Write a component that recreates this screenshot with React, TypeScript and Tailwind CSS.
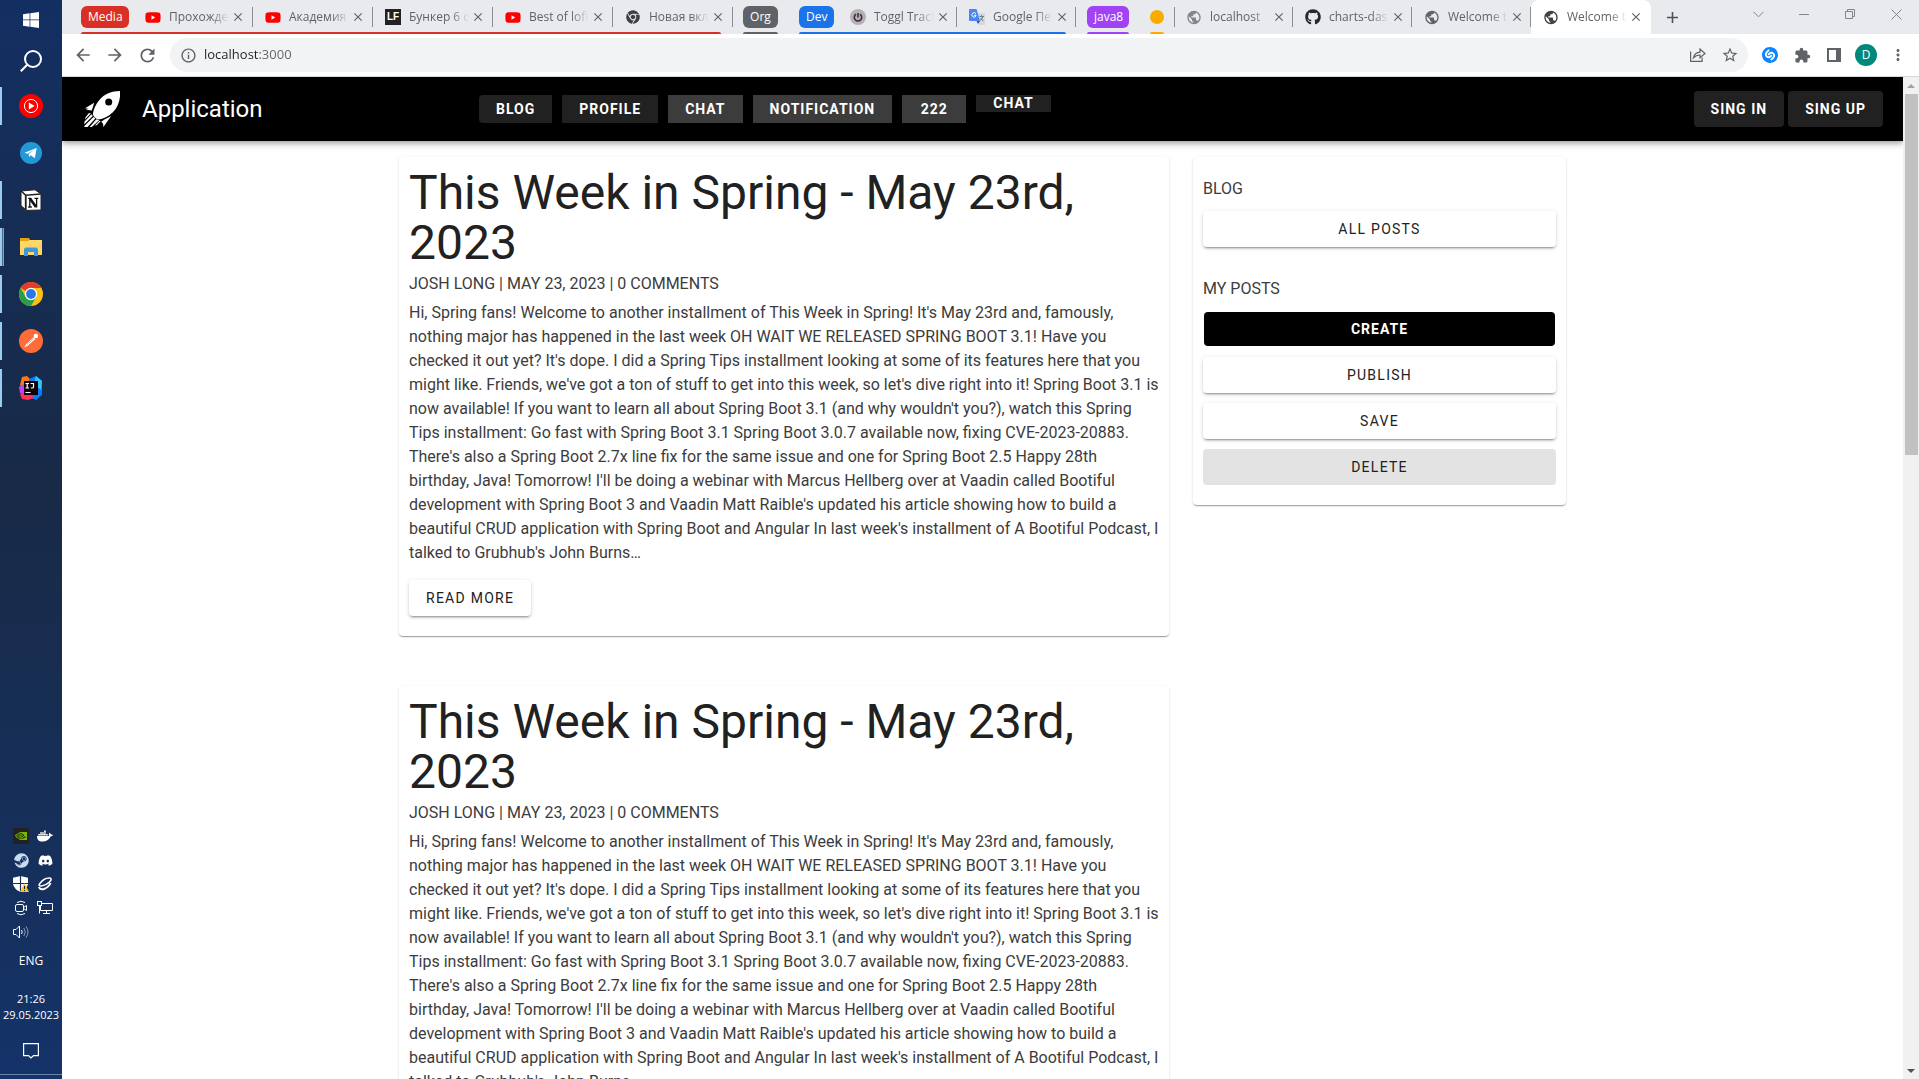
import type { ReactNode } from 'react';
import { FaChrome, FaDiscord, FaDocker, FaGithub, FaSteam, FaYoutube } from 'react-icons/fa';
import {
  MdAdd,
  MdArrowBack,
  MdArrowForward,
  MdClose,
  MdExtension,
  MdInfoOutline,
  MdMoreVert,
  MdPublic,
  MdRefresh,
  MdStarBorder,
} from 'react-icons/md';
import { SiNvidia, SiShazam } from 'react-icons/si';

/* ---------- Taskbar ---------- */

function WindowsIcon() {
  return (
    <svg width="16" height="16" viewBox="0 0 16 16" fill="#fff">
      <path d="M0 2.2 6.6 1.3V7.6H0zM7.3 1.2 16 0v7.6H7.3zM0 8.3h6.6v6.4L0 13.8zM7.3 8.3H16V16l-8.7-1.2z" />
    </svg>
  );
}

function SearchIcon() {
  return (
    <svg width="22" height="22" viewBox="0 0 22 22" fill="none" stroke="#fff" strokeWidth="2">
      <circle cx="13" cy="9" r="8" />
      <path d="M7.2 14.8 0.8 21.2" />
    </svg>
  );
}

function YoutubeMusicIcon() {
  return (
    <svg width="24" height="24" viewBox="0 0 24 24">
      <circle cx="12" cy="12" r="12" fill="#f00" />
      <circle cx="12" cy="12" r="6.6" fill="none" stroke="#fff" strokeWidth="1" />
      <path d="M9.8 8.4 15.6 12l-5.8 3.6z" fill="#fff" />
    </svg>
  );
}

function TelegramIcon() {
  return (
    <svg width="22" height="22" viewBox="0 0 22 22">
      <circle cx="11" cy="11" r="11" fill="#2299d6" />
      <path d="M4.5 10.8 16.7 6l-1.9 10.2-4-2.9-1.7 1.8-.5-3.2 5.4-4-6.6 3.9z" fill="#fff" />
    </svg>
  );
}

function NotionIcon() {
  return (
    <svg width="22" height="22" viewBox="0 0 22 22">
      <path d="M1 2 15 .8l6 4.200v16L6 21.4 1 16.5z" fill="#fff" stroke="#222" strokeWidth="1" />
      <path d="M1 2l5 4.500V21L1 16.500z" fill="#fff" stroke="#222" />
      <path d="M1 2l4.8 4.2 15-1.2M5.6 6.2V21" fill="none" stroke="#222" strokeWidth="1.5" />
      <path d="M10 9.500l6 8.500" stroke="#111" strokeWidth="2.600" />
      <path d="M9.800 18V9.300M8.200 18h3.600M8.200 9.300h3M14.500 9.300h3.800M16.600 18.500V9.300" fill="none" stroke="#111" strokeWidth="1.300" />
    </svg>
  );
}

function ExplorerIcon() {
  return (
    <svg width="22" height="18" viewBox="0 0 22 18">
      <path d="M0 0h9l1 2H22v4H0z" fill="#e2a40e" />
      <path d="M0 3h8l1.5-1H22v15H0z" fill="#ffd766" />
      <path d="M4 18V11l1.500-1.500h11L18 11v7h-4v-4H8v4z" fill="#3f97dd" />
    </svg>
  );
}

function ChromeIcon() {
  return (
    <svg width="24" height="24" viewBox="0 0 24 24">
      <circle cx="12" cy="12" r="12" fill="#fbc116" />
      <path d="M12 12 1.600 6A12 12 0 0 1 22.400 6H12z" fill="#e33b2e" />
      <path d="M1.600 6A12 12 0 0 0 12 24l5.200-9L12 12 6.800 15z" fill="#2a9d49" />
      <circle cx="12" cy="12" r="6.200" fill="#fff" />
      <circle cx="12" cy="12" r="4.900" fill="#2a77ea" />
    </svg>
  );
}

function PostmanIcon() {
  return (
    <svg width="24" height="24" viewBox="0 0 24 24">
      <circle cx="12" cy="12" r="12" fill="#ff6c37" />
      <circle cx="16.800" cy="7" r="2.200" fill="#fff" />
      <path d="M14.500 8.200 16.300 10 9 16.500l-4 2 2.500-3.500z" fill="#fff" />
      <path d="M8 15.800 14.500 9.500" stroke="#ff6c37" strokeWidth="0.600" />
    </svg>
  );
}

function IntellijIcon() {
  return (
    <svg width="24" height="24" viewBox="0 0 24 24">
      <path d="M3 1 8 0l4 4-7 9-4-4z" fill="#f9791e" />
      <path d="M0 11l6-4v12l-5-2z" fill="#b74af7" />
      <path d="M10 3 17 0l6 5v14l-6 5-7-3z" fill="#087cfa" />
      <path d="M17 0l6 5-1 9-7-6z" fill="#3bc3f7" />
      <path d="M1 18l9-3 5 7-6 2-6-1z" fill="#fe315d" />
      <path d="M5 5h14v14H5z" fill="#100408" />
      <path d="M6.500 7.500H10M8.200 7.500V12M6.500 12H10M11.500 7.500h3V11q0 1-1.200 1h-1.500M6.500 16.500h5" fill="none" stroke="#fff" strokeWidth="1.200" />
    </svg>
  );
}

type TaskState = 'idle' | 'open' | 'stacked';

const taskbarApps: { name: string; icon: ReactNode; state: TaskState }[] = [
  { name: 'YouTube Music', icon: <YoutubeMusicIcon />, state: 'open' },
  { name: 'Telegram', icon: <TelegramIcon />, state: 'idle' },
  { name: 'Notion', icon: <NotionIcon />, state: 'open' },
  { name: 'Explorer', icon: <ExplorerIcon />, state: 'stacked' },
  { name: 'Chrome', icon: <ChromeIcon />, state: 'open' },
  { name: 'Postman', icon: <PostmanIcon />, state: 'open' },
  { name: 'IntelliJ IDEA', icon: <IntellijIcon />, state: 'open' },
];

function Indicator({ state }: { state: TaskState }) {
  if (state === 'idle') return null;
  return (
    <span className="absolute left-0 flex h-[38px]">
      <span className="w-0.5 bg-[#9ccbf0]" />
      {state === 'stacked' && <span className="w-0.5 border-l border-[#4b6c8b] bg-[#7ba3c6]" />}
    </span>
  );
}

function NvidiaTray() {
  return (
    <span className="flex size-4 items-center justify-center bg-[#222]">
      <SiNvidia size={12} color="#76b900" />
    </span>
  );
}

function ShieldTray() {
  return (
    <svg width="16" height="16" viewBox="0 0 16 16">
      <path d="M7.500 0 15 1.800V8q-1 5-7.500 8Q1 13 0 8V1.800z" fill="#fff" />
      <path d="M7.500 0v16M0 7.500h15" stroke="#17315f" strokeWidth="1.200" />
      <path d="M11.500 7 16 16H7z" fill="#ffc31f" />
      <path d="M11.500 10v3M11.500 14v1" stroke="#222" />
    </svg>
  );
}

function EllipseTray() {
  return (
    <svg width="16" height="16" viewBox="0 0 16 16" fill="none" stroke="#fff" strokeWidth="1.600">
      <path d="M2.500 8Q7 1.500 13 2q2.500 1-.5 4Q9 9.500 4.500 10 1 10 2.500 8z" />
      <path d="M2 11q1 3 5 2Q12 11 13.500 7" strokeWidth="2" />
    </svg>
  );
}

function CameraTray() {
  return (
    <svg width="14" height="16" viewBox="0 0 14 16" fill="none" stroke="#fff">
      <path d="M3 2.500q4-2.500 8 0M3 13.500q4 2.500 8 0" />
      <rect x="1.500" y="4.500" width="8" height="7" rx="1.500" />
      <path d="M9.500 7.500 12.500 5.500v5l-3-2" />
    </svg>
  );
}

function NetworkTray() {
  return (
    <svg width="16" height="14" viewBox="0 0 16 14" fill="none" stroke="#fff">
      <path d="M5 2.500h10.500v7H3.500V5M9.500 9.500v3M6 12.500h7" />
      <rect x="0.500" y="0.500" width="4" height="4" />
      <path d="M2.500 4.500v8" />
    </svg>
  );
}

function VolumeTray() {
  return (
    <svg width="17" height="14" viewBox="0 0 17 14" fill="none" stroke="#fff">
      <path d="M.5 4.500h2.500L6.500 1v12L3 9.500H.5z" />
      <path d="M8.500 5q1.500 2 0 4" />
      <path d="M10.800 3q3 4 0 8M13 1.500q4 5.500 0 11" stroke="#8b9ab5" />
    </svg>
  );
}

function Taskbar() {
  return (
    <aside className="flex w-[62px] shrink-0 flex-col bg-linear-to-b from-[#132f62] via-[#182a46] via-45% to-[#143369] text-white">
      <button aria-label="Start" className="flex h-10 items-center justify-center">
        <WindowsIcon />
      </button>
      <button aria-label="Search" className="flex h-[42px] items-center justify-center">
        <SearchIcon />
      </button>
      {taskbarApps.map((app) => (
        <button key={app.name} aria-label={app.name} className="relative flex h-[47px] items-center justify-center">
          <Indicator state={app.state} />
          {app.icon}
        </button>
      ))}
      <div className="mt-auto flex flex-col items-center font-['Open_Sans','Noto_Sans',sans-serif] text-xs">
        <div className="grid auto-rows-[24px] grid-cols-[24px_24px] place-items-center pl-1">
          <NvidiaTray />
          <FaDocker size={16} />
          <FaSteam size={15} color="#c9dcf0" />
          <FaDiscord size={15} />
          <ShieldTray />
          <EllipseTray />
          <CameraTray />
          <NetworkTray />
          <VolumeTray />
        </div>
        <button className="mt-[5px] h-6">ENG</button>
        <div className="mt-[18px] flex flex-col items-center text-[11px] leading-4">
          <span>21:26</span>
          <span>29.05.2023</span>
        </div>
        <button aria-label="Notifications" className="mt-5 flex h-8 w-full items-start justify-center border-b border-[#6d80a5]">
          <svg width="16" height="16" viewBox="0 0 16 16" fill="none" stroke="#fff" strokeWidth="1.200">
            <path d="M.6.6h14.800v12H10.500L8 15l-2.500-2.400H.6z" />
          </svg>
        </button>
        <div className="h-1" />
      </div>
    </aside>
  );
}

/* ---------- Browser frame ---------- */

function LfFavicon() {
  return (
    <span className="flex size-4 items-center justify-center bg-[#222] font-['Liberation_Sans',sans-serif] text-[10px] font-bold text-white">
      LF
    </span>
  );
}

function TogglFavicon() {
  return (
    <svg width="16" height="16" viewBox="0 0 16 16" fill="none" stroke="#3b2440" strokeWidth="1.500">
      <circle cx="8" cy="8" r="8" fill="#b4b1b0" stroke="none" />
      <path d="M8 4v4.500M6 5.200a3.700 3.700 0 1 0 4 0" />
    </svg>
  );
}

function TranslateFavicon() {
  return (
    <svg width="16" height="16" viewBox="0 0 16 16">
      <path d="M6 4h10v12H10z" fill="#d6d8dc" />
      <path d="M0 1q0-1 1-1h6.500L11 12H1q-1 0-1-1z" fill="#4a86ee" />
      <path d="M7.500 12H11l-2 3z" fill="#2350b5" />
      <path d="M7 4.800A2.200 2.200 0 1 0 7 7V6.300H5" fill="none" stroke="#fff" />
      <path d="M10.500 7.500H15M12.500 6v1.500M14 7.500q-1 3-3 4M11.500 9q1 2 3 2.800" fill="none" stroke="#6c7f8c" />
    </svg>
  );
}

const youtube = <FaYoutube size={17} color="#f00" />;

type TabData = { icon: ReactNode; title: string };

function Tab({ tab, wide, active }: { tab: TabData; wide?: boolean; active?: boolean }) {
  return (
    <div
      className={`relative flex h-full items-center pl-3 ${wide ? 'w-[120px]' : 'w-[119px]'} ${
        active ? 'rounded-t-lg bg-white' : ''
      }`}
    >
      <span className="flex w-4 shrink-0 justify-center">{tab.icon}</span>
      <button className="ml-2 w-[60px] overflow-hidden mask-r-from-70% text-left whitespace-nowrap text-[#5f6368]">
        {tab.title}
      </button>
      <button aria-label="Close tab" className="ml-0.5 text-[#5f6368]">
        <MdClose size={14} />
      </button>
      {!active && <span className="absolute right-0 h-5 w-px bg-[#8b8e93]" />}
    </div>
  );
}

const mediaTabs: TabData[] = [
  { icon: youtube, title: 'Прохожде' },
  { icon: youtube, title: 'Академия' },
  { icon: <LfFavicon />, title: 'Бункер 6 с' },
  { icon: youtube, title: 'Best of lofi' },
  { icon: <FaChrome size={14} color="#3c4043" />, title: 'Новая вкл' },
];

const devTabs: TabData[] = [
  { icon: <TogglFavicon />, title: 'Toggl Track' },
  { icon: <TranslateFavicon />, title: 'Google Пе' },
];

const looseTabs: TabData[] = [
  { icon: <MdPublic size={17} color="#80868b" />, title: 'localhost' },
  { icon: <FaGithub size={16} color="#24292f" />, title: 'charts-das' },
  { icon: <MdPublic size={17} color="#5f6368" />, title: 'Welcome t' },
];

function TabStrip() {
  const chip = 'h-[22px] rounded-md px-[7px] text-white';
  const line = 'absolute bottom-0 left-0 h-0.5 rounded-t-sm';
  return (
    <div className="flex h-[34px] bg-[#e8eaed] pl-[19px] text-xs">
      <div className="relative flex items-center">
        <button className={`${chip} mr-1 w-12 bg-[#d93025]`}>Media</button>
        {mediaTabs.map((t) => (
          <Tab key={t.title} tab={t} wide />
        ))}
        <span className={`${line} right-3 bg-[#d93025]`} />
      </div>
      <div className="relative ml-2.5 flex items-center">
        <button className={`${chip} w-[35px] bg-[#5f6368]`}>Org</button>
        <span className={`${line} right-0 bg-[#5f6368]`} />
      </div>
      <div className="relative ml-[21px] flex items-center">
        <button className={`${chip} mr-1 w-[35px] bg-[#1a73e8]`}>Dev</button>
        {devTabs.map((t) => (
          <Tab key={t.title} tab={t} />
        ))}
        <span className={`${line} right-2.5 bg-[#1a73e8]`} />
      </div>
      <div className="relative ml-[11px] flex items-center">
        <button className={`${chip} w-[42px] bg-[#a142f4]`}>java8</button>
        <span className={`${line} right-0 bg-[#a142f4]`} />
      </div>
      <div className="relative ml-[21px] flex items-center">
        <button aria-label="Orange group" className="size-3.5 rounded-full bg-[#faab00]" />
        <span className={`${line} right-0 bg-[#faab00]`} />
      </div>
      <div className="ml-2.5 flex items-center">
        <span className="-mr-px h-5 w-px bg-[#8b8e93]" />
        {looseTabs.map((t) => (
          <Tab key={t.title} tab={t} />
        ))}
        <Tab tab={{ icon: <MdPublic size={17} color="#3f4347" />, title: 'Welcome t' }} wide active />
      </div>
      <button aria-label="New tab" className="ml-3 text-[#4d5156]">
        <MdAdd size={19} />
      </button>
      <div className="ml-auto flex h-7 text-[#83868a]">
        <button aria-label="Search tabs" className="flex w-[46px] items-center justify-center">
          <svg width="11" height="7" viewBox="0 0 11 7" fill="none" stroke="currentColor">
            <path d="M.5.8l5 5 5-5" />
          </svg>
        </button>
        <button aria-label="Minimize" className="flex w-[46px] items-center justify-center">
          <svg width="10" height="1" viewBox="0 0 10 1" fill="currentColor">
            <path d="M0 0h10v1H0z" />
          </svg>
        </button>
        <button aria-label="Restore" className="flex w-[46px] items-center justify-center">
          <svg width="10" height="10" viewBox="0 0 10 10" fill="none" stroke="currentColor">
            <path d="M.5 2.500h7v7h-7zM2.500 2.500v-2h7v7h-2" />
          </svg>
        </button>
        <button aria-label="Close" className="flex w-[46px] items-center justify-center">
          <svg width="11" height="11" viewBox="0 0 11 11" fill="none" stroke="currentColor">
            <path d="M.5.5l10 10M10.500.5l-10 10" />
          </svg>
        </button>
      </div>
    </div>
  );
}

function ToolButton({ label, children }: { label: string; children: ReactNode }) {
  return (
    <button aria-label={label} className="flex w-8 shrink-0 items-center justify-center">
      {children}
    </button>
  );
}

function Toolbar() {
  return (
    <div className="flex border-b border-[#d5d7da] bg-white px-[5px] py-1 text-[#5f6368]">
      <ToolButton label="Back">
        <MdArrowBack size={20} />
      </ToolButton>
      <ToolButton label="Forward">
        <MdArrowForward size={20} />
      </ToolButton>
      <ToolButton label="Reload">
        <MdRefresh size={21} />
      </ToolButton>
      <div className="mr-1.5 ml-[7px] flex h-[34px] flex-1 items-center rounded-full bg-[#f1f3f4] pr-0.5 pl-2.5">
        <MdInfoOutline size={17} />
        <input
          aria-label="Address"
          defaultValue="localhost:3000"
          className="ml-[7px] min-w-0 flex-1 bg-[linear-gradient(to_right,#202124_55px,#5f6368_55px)] bg-clip-text text-[13px] text-transparent outline-none"
        />
        <ToolButton label="Share">
          <svg width="16" height="14" viewBox="0 0 16 14" fill="none" stroke="currentColor" strokeWidth="1.200">
            <path d="M.6 3.500v9.900h11.500V9.500" />
            <path d="M3.500 9.800Q4.500 4.500 10 4.200V1l5 4.500-5 4.300V7Q6 7 3.500 9.800z" />
          </svg>
        </ToolButton>
        <ToolButton label="Bookmark">
          <MdStarBorder size={18} />
        </ToolButton>
      </div>
      <ToolButton label="Shazam">
        <SiShazam size={16} color="#0a84ff" />
      </ToolButton>
      <ToolButton label="Extensions">
        <MdExtension size={17} />
      </ToolButton>
      <ToolButton label="Side panel">
        <svg width="14" height="14" viewBox="0 0 14 14">
          <path d="M1 1h12v12H1z" fill="none" stroke="currentColor" strokeWidth="2" />
          <path d="M9 1h4v12H9z" fill="currentColor" />
        </svg>
      </ToolButton>
      <ToolButton label="Profile">
        <span className="flex size-[22px] items-center justify-center rounded-full bg-[#00897b] text-xs text-white">
          D
        </span>
      </ToolButton>
      <ToolButton label="Menu">
        <MdMoreVert size={18} />
      </ToolButton>
    </div>
  );
}

/* ---------- Application ---------- */

function RocketLogo() {
  return (
    <svg width="36" height="36" viewBox="0 0 102 102" fill="#fff">
      <path
        fillRule="evenodd"
        d="M102 0C78 0 58 8 43 26 33 38 27 52 25 65c2 8 8 14 16 16 14-2 28-9 40-20C97 46 104 24 102 0zM70 21a10 10 0 1 1 0 20 10 10 0 0 1 0-20z"
      />
      <path d="M29 33 3 49l10 1-8 3 17 2zM77 71 55 102l-1-9-5-6 9-6z" />
      <path d="M21 66 1 87v7l24-23zM27 74 1 99v3h9l22-24zM35 80 16 102h6l21-19zM14 62 4 75l-1 6 16-17z" />
      <path d="M44 84 31 98l5-1 11-11z" />
    </svg>
  );
}

const barButton = 'min-w-16 px-[17px] text-sm font-bold tracking-[1px] text-white';

function AppBar() {
  return (
    <header className="relative z-10 flex h-16 items-center bg-black pr-5 pl-[22px] text-white shadow-[0_2px_4px_-1px_rgba(0,0,0,0.2),0_4px_5px_0_rgba(0,0,0,0.14),0_1px_10px_0_rgba(0,0,0,0.12)]">
      <RocketLogo />
      <h1 className="ml-[22px] w-[337px] text-2xl">Application</h1>
      <nav className="flex h-7 items-start gap-2.5">
        <button className={`${barButton} h-7 rounded-l bg-[#212121]`}>BLOG</button>
        <button className={`${barButton} h-7 bg-[#212121]`}>PROFILE</button>
        <button className={`${barButton} h-7 bg-[#3c3c3c]`}>CHAT</button>
        <button className={`${barButton} h-7 bg-[#3c3c3c]`}>NOTIFICATION</button>
        <button className={`${barButton} h-7 bg-[#3c3c3c]`}>222</button>
        <button className={`${barButton} h-[17px] bg-[#212121] leading-[17px]`}>CHAT</button>
      </nav>
      <div className="ml-auto flex gap-1">
        <button className={`${barButton} h-9 rounded bg-[#212121]`}>SING IN</button>
        <button className={`${barButton} h-9 rounded bg-[#212121]`}>SING UP</button>
      </div>
    </header>
  );
}

const card =
  'rounded bg-white px-2.5 pb-5 shadow-[0_2px_1px_-1px_rgba(0,0,0,0.2),0_1px_1px_0_rgba(0,0,0,0.14),0_1px_3px_0_rgba(0,0,0,0.12)]';
const raised =
  'h-9 rounded bg-white text-sm tracking-[0.09em] shadow-[0_3px_1px_-2px_rgba(0,0,0,0.2),0_2px_2px_0_rgba(0,0,0,0.14),0_1px_5px_0_rgba(0,0,0,0.12)]';

const post = {
  title: 'This Week in Spring - May 23rd, 2023',
  meta: 'JOSH LONG | MAY 23, 2023 | 0 COMMENTS',
  body: "Hi, Spring fans! Welcome to another installment of This Week in Spring! It's May 23rd and, famously, nothing major has happened in the last week OH WAIT WE RELEASED SPRING BOOT 3.1! Have you checked it out yet? It's dope. I did a Spring Tips installment looking at some of its features here that you might like. Friends, we've got a ton of stuff to get into this week, so let's dive right into it! Spring Boot 3.1 is now available! If you want to learn all about Spring Boot 3.1 (and why wouldn't you?), watch this Spring Tips installment: Go fast with Spring Boot 3.1 Spring Boot 3.0.7 available now, fixing CVE-2023-20883. There's also a Spring Boot 2.7x line fix for the same issue and one for Spring Boot 2.5 Happy 28th birthday, Java! Tomorrow! I'll be doing a webinar with Marcus Hellberg over at Vaadin called Bootiful development with Spring Boot 3 and Vaadin Matt Raible's updated his article showing how to build a beautiful CRUD application with Spring Boot and Angular In last week's installment of A Bootiful Podcast, I talked to Grubhub's John Burns…",
};

function PostCard() {
  return (
    <article className={`${card} pt-[11px]`}>
      <h2 className="text-5xl leading-[50px]">{post.title}</h2>
      <p className="mt-1 text-[#3c3c3c]">{post.meta}</p>
      <p className="mt-[5px] text-[#3c3c3c]">{post.body}</p>
      <button className={`${raised} mt-[15px] px-[17px]`}>READ MORE</button>
    </article>
  );
}

function SideCard() {
  return (
    <aside className={`${card} flex flex-col pt-5`}>
      <h3 className="text-[#3c3c3c]">BLOG</h3>
      <button className={`${raised} mt-2.5`}>ALL POSTS</button>
      <h3 className="mt-[30px] text-[#3c3c3c]">MY POSTS</h3>
      <div className="mt-2.5 flex flex-col gap-2.5">
        <button className="m-px h-[34px] rounded-sm bg-black text-sm font-bold tracking-[1px] text-white">CREATE</button>
        <button className={raised}>PUBLISH</button>
        <button className={raised}>SAVE</button>
        <button className="h-9 rounded bg-[#e3e3e3] text-sm tracking-[0.09em]">DELETE</button>
      </div>
    </aside>
  );
}

function Scrollbar() {
  return (
    <div className="flex w-4 shrink-0 flex-col items-center bg-[#f1f1f1]">
      <svg width="16" height="17" viewBox="0 0 16 17" fill="#a3a3a3">
        <path d="M8 7l4 4H4z" />
      </svg>
      <div className="h-[36%] w-[13px] bg-[#c1c1c1]" />
      <svg className="mt-auto" width="16" height="17" viewBox="0 0 16 17" fill="#505050">
        <path d="M8 11 4 7h8z" />
      </svg>
    </div>
  );
}

export default function App() {
  return (
    <div className="flex h-screen overflow-hidden">
      <Taskbar />
      <div className="flex min-w-0 flex-1 flex-col">
        <div className="font-['Open_Sans','Noto_Sans',sans-serif]">
          <TabStrip />
          <Toolbar />
        </div>
        <div className="flex min-h-0 flex-1 font-[Roboto,sans-serif] text-[#212121]">
          <div className="min-w-0 flex-1 overflow-hidden bg-white">
            <AppBar />
            <main className="mx-auto grid max-w-[1167px] grid-cols-[770fr_373fr] items-start gap-6 pt-4">
              <div className="flex flex-col gap-[50px]">
                <PostCard />
                <PostCard />
              </div>
              <SideCard />
            </main>
          </div>
          <Scrollbar />
        </div>
      </div>
    </div>
  );
}
